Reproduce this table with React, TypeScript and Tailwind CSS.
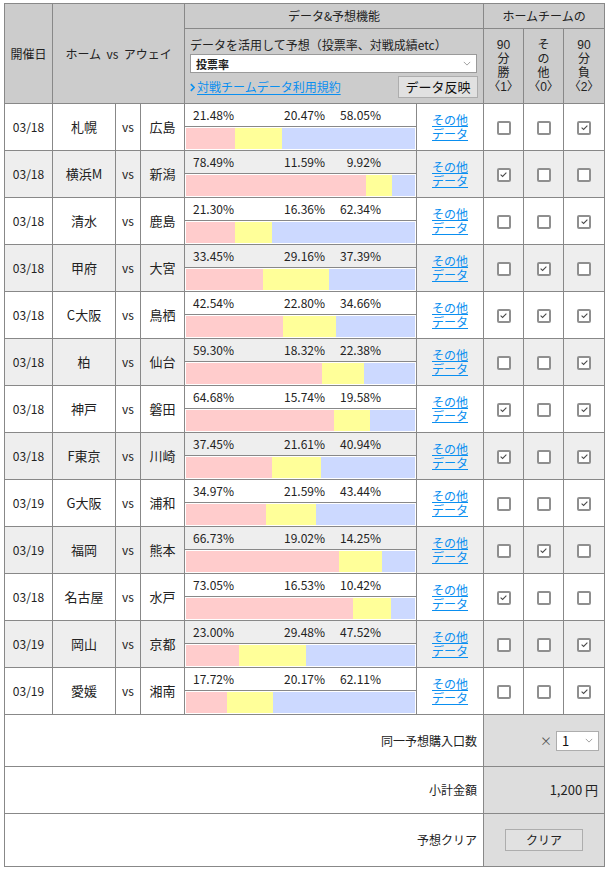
import React from 'react'

type Row = {
  date: string
  home: string
  away: string
  p: [string, string, string]
  c: [boolean, boolean, boolean]
}

const rows: Row[] = [
  { date: '03/18', home: '札幌', away: '広島', p: ['21.48', '20.47', '58.05'], c: [false, false, true] },
  { date: '03/18', home: '横浜M', away: '新潟', p: ['78.49', '11.59', '9.92'], c: [true, false, false] },
  { date: '03/18', home: '清水', away: '鹿島', p: ['21.30', '16.36', '62.34'], c: [false, false, true] },
  { date: '03/18', home: '甲府', away: '大宮', p: ['33.45', '29.16', '37.39'], c: [false, true, false] },
  { date: '03/18', home: 'C大阪', away: '鳥栖', p: ['42.54', '22.80', '34.66'], c: [true, true, true] },
  { date: '03/18', home: '柏', away: '仙台', p: ['59.30', '18.32', '22.38'], c: [false, false, true] },
  { date: '03/18', home: '神戸', away: '磐田', p: ['64.68', '15.74', '19.58'], c: [true, false, true] },
  { date: '03/18', home: 'F東京', away: '川崎', p: ['37.45', '21.61', '40.94'], c: [true, false, true] },
  { date: '03/19', home: 'G大阪', away: '浦和', p: ['34.97', '21.59', '43.44'], c: [false, false, true] },
  { date: '03/19', home: '福岡', away: '熊本', p: ['66.73', '19.02', '14.25'], c: [false, true, false] },
  { date: '03/18', home: '名古屋', away: '水戸', p: ['73.05', '16.53', '10.42'], c: [true, false, false] },
  { date: '03/19', home: '岡山', away: '京都', p: ['23.00', '29.48', '47.52'], c: [false, false, true] },
  { date: '03/19', home: '愛媛', away: '湘南', p: ['17.72', '20.17', '62.11'], c: [false, false, true] },
]

function Check({ on }: { on: boolean }) {
  return (
    <span className="inline-flex h-[14px] w-[14px] items-center justify-center rounded-[2px] border-2 border-[#8f8f8f] bg-white align-middle">
      {on && (
        <svg viewBox="0 0 10 10" className="h-[9px] w-[9px]">
          <path d="M1.8 5.2 L4 7.2 L8.2 3" fill="none" stroke="#4a4a4a" strokeWidth="1.2" />
        </svg>
      )}
    </span>
  )
}

function Chevron() {
  return (
    <svg viewBox="0 0 10 6" className="h-[5px] w-[8px]">
      <path d="M1 1 L5 5 L9 1" fill="none" stroke="#8a8a8a" strokeWidth="1" />
    </svg>
  )
}

// 行間が詰まったテキスト用（メトリクスの小さいフォントを先頭に）
const tight = "font-['Liberation_Sans','Noto_Sans_CJK_JP',sans-serif]"

// 縦書き風のヘッダー
function VHead({ lines }: { lines: string[] }) {
  return (
    <div className={`flex flex-col items-center leading-[14px] ${tight}`}>
      {lines.map((l, i) => (
        <span key={i}>{l}</span>
      ))}
    </div>
  )
}

const cell = 'border border-[#888] text-center align-middle font-normal p-0'

export default function App() {
  return (
    <div className="min-h-[870px] bg-white pl-[4px] pt-[3px] font-['Noto_Sans_CJK_JP','Noto_Sans',sans-serif] text-[12px] leading-[14px] text-[#222]">
      <table className="w-[600px] table-fixed border-collapse border border-[#888]">
        <colgroup>
          <col className="w-[48px]" />
          <col className="w-[63px]" />
          <col className="w-[25px]" />
          <col className="w-[44px]" />
          <col className="w-[232px]" />
          <col className="w-[67px]" />
          <col className="w-[40px]" />
          <col className="w-[40px]" />
          <col className="w-[41px]" />
        </colgroup>
        <thead>
          <tr className="h-[25px] bg-[#ccc]">
            <th rowSpan={2} className={cell}>開催日</th>
            <th rowSpan={2} colSpan={3} className={cell}>
              ホーム&nbsp;&nbsp;vs&nbsp;&nbsp;アウェイ
            </th>
            <th colSpan={2} className={cell}>データ&amp;予想機能</th>
            <th colSpan={3} className={cell}>ホームチームの</th>
          </tr>
          <tr className="h-[75px] bg-[#ccc]">
            <th colSpan={2} className={`${cell} text-left align-top`}>
              <div className="flex flex-col pl-[5px] pr-[6px] pt-[9px]">
                <span className="leading-[14px]">データを活用して予想（投票率、対戦成績etc）</span>
                <div className="mt-[2px] flex h-[19px] items-center justify-between border border-[#9a9a9a] bg-white pl-[5px] pr-[5px]">
                  <span className="font-bold text-[11px]">投票率</span>
                  <Chevron />
                </div>
                <div className="mt-[3px] flex items-center justify-between">
                  <a className="flex items-center text-[#0a8ff0] underline underline-offset-2">
                    <svg viewBox="0 0 6 10" className="mr-[2px] h-[9px] w-[5px]">
                      <path d="M1 1 L5 5 L1 9" fill="none" stroke="#0a8ff0" strokeWidth="2" />
                    </svg>
                    対戦チームデータ利用規約
                  </a>
                  <button className="mr-[-1px] h-[22px] w-[80px] border border-[#adadad] bg-[#e1e1e1] text-[13px] text-[#111]">
                    データ反映
                  </button>
                </div>
              </div>
            </th>
            <th className={cell}><VHead lines={['90', '分', '勝', '〈1〉']} /></th>
            <th className={cell}><VHead lines={['そ', 'の', '他', '〈0〉']} /></th>
            <th className={cell}><VHead lines={['90', '分', '負', '〈2〉']} /></th>
          </tr>
        </thead>
        <tbody>
          {rows.map((r, i) => {
            const bg = i % 2 === 0 ? 'bg-white' : 'bg-[#eee]'
            return (
              <tr key={i} className={`h-[47px] ${bg}`}>
                <td className={cell}>{r.date}</td>
                <td className={`${cell} text-[13px]`}>{r.home}</td>
                <td className={cell}>vs</td>
                <td className={`${cell} text-[13px]`}>{r.away}</td>
                <td className={cell}>
                  <div className="flex h-[22px] items-center border-b border-[#888] pl-[8px] text-left">
                    <span className="w-[91px]">{r.p[0]}%</span>
                    <span className="w-[56px]">{r.p[1]}%</span>
                    <span className="w-[41px] text-right">{r.p[2]}%</span>
                  </div>
                  <div className="flex h-[23px] border border-white">
                    <div className="bg-[#ffcccc]" style={{ width: `${r.p[0]}%` }} />
                    <div className="bg-[#ffff99]" style={{ width: `${r.p[1]}%` }} />
                    <div className="flex-1 bg-[#ccd9ff]" />
                  </div>
                </td>
                <td className={cell}>
                  <a className={`inline-flex flex-col text-[12px] leading-[14px] text-[#0a8ff0] underline underline-offset-1 ${tight}`}>
                    <span>その他</span>
                    <span>データ</span>
                  </a>
                </td>
                {r.c.map((on, j) => (
                  <td key={j} className={cell}>
                    <Check on={on} />
                  </td>
                ))}
              </tr>
            )
          })}
          <tr className="h-[52px] bg-white">
            <td colSpan={6} className={`${cell} pr-[6px] text-right`}>同一予想購入口数</td>
            <td colSpan={3} className={`${cell} bg-[#ddd]`}>
              <div className="flex items-center justify-end pr-[5px]">
                <span className="mr-[4px] text-[#555]">×</span>
                <div className="flex h-[20px] w-[43px] items-center justify-between border border-[#adadad] bg-white pl-[5px] pr-[5px]">
                  <span className="text-[13px] text-[#111]">1</span>
                  <Chevron />
                </div>
              </div>
            </td>
          </tr>
          <tr className="h-[47px] bg-white">
            <td colSpan={6} className={`${cell} pr-[6px] text-right`}>小計金額</td>
            <td colSpan={3} className={`${cell} bg-[#ddd] pr-[6px] text-right text-[13px]`}>1,200 円</td>
          </tr>
          <tr className="h-[53px] bg-white">
            <td colSpan={6} className={`${cell} pr-[6px] text-right`}>予想クリア</td>
            <td colSpan={3} className={`${cell} bg-[#ddd]`}>
              <button className="h-[22px] w-[78px] border border-[#adadad] bg-[#e1e1e1] text-[12px]">クリア</button>
            </td>
          </tr>
        </tbody>
      </table>
    </div>
  )
}
